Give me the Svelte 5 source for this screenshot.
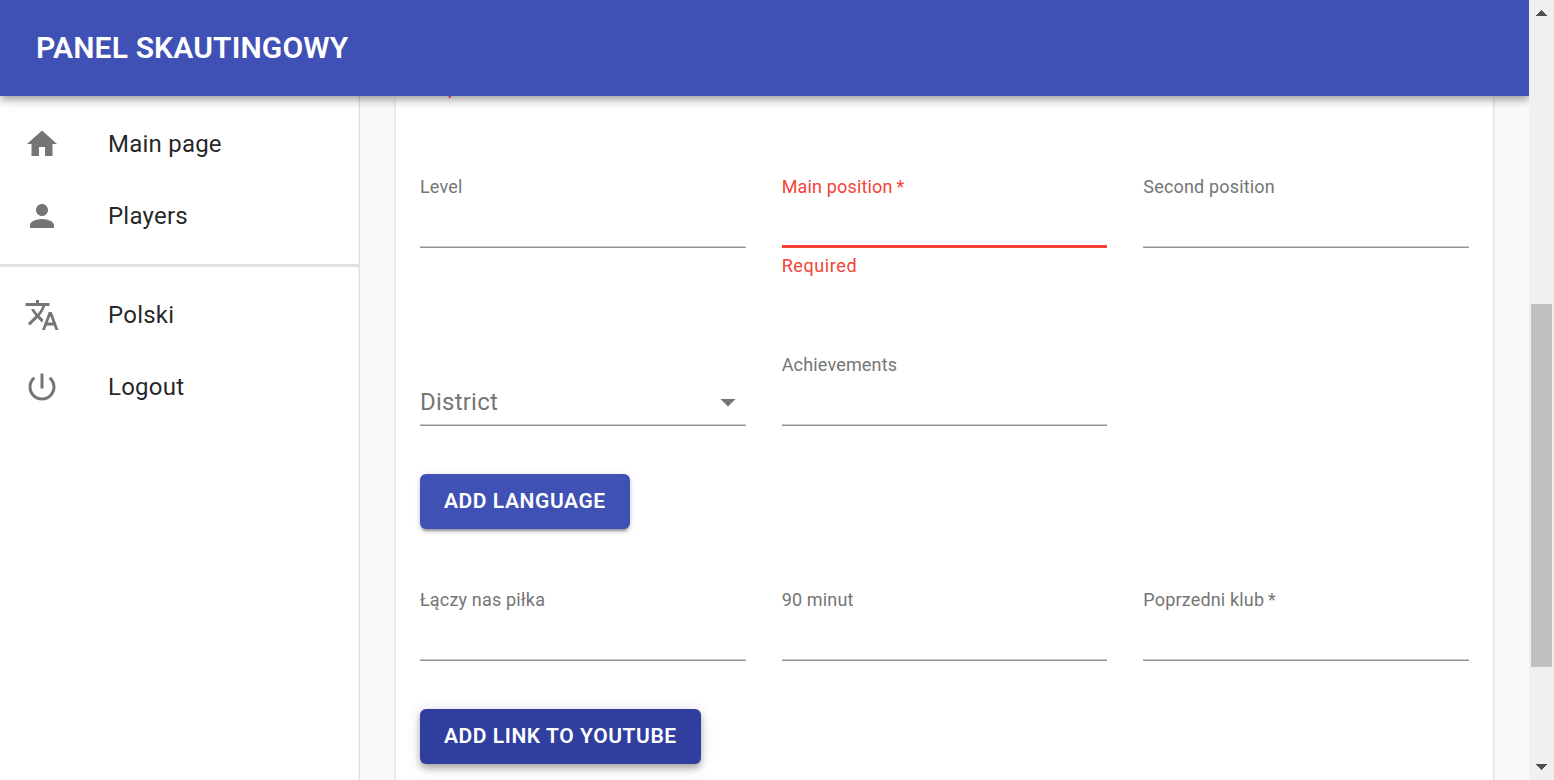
<script>
  const mainLinks = [
    { label: 'Main page', icon: 'M10 20v-6h4v6h5v-8h3L12 3 2 12h3v8z' },
    { label: 'Players', icon: 'M12 12c2.21 0 4-1.79 4-4s-1.79-4-4-4-4 1.79-4 4 1.79 4 4 4zm0 2c-2.67 0-8 1.34-8 4v2h16v-2c0-2.66-5.33-4-8-4z' }
  ];
  const userLinks = [
    { label: 'Polski', icon: 'M12.87 15.07l-2.54-2.51.03-.03c1.74-1.94 2.98-4.17 3.71-6.53H17V4h-7V2H8v2H1v1.99h11.17C11.5 7.92 10.44 9.75 9 11.35 8.07 10.32 7.3 9.19 6.69 8h-2c.73 1.63 1.73 3.17 2.98 4.56l-5.09 5.02L4 19l5-5 3.11 3.11.76-2.04zM18.5 10h-2L12 22h2l1.12-3h4.75L21 22h2l-4.5-12zm-2.62 7l1.62-4.33L19.12 17h-3.24z' },
    { label: 'Logout', icon: 'M13 3h-2v10h2V3zm4.83 2.17l-1.42 1.42C17.99 7.86 19 9.81 19 12c0 3.87-3.13 7-7 7s-7-3.13-7-7c0-2.19 1.01-4.14 2.58-5.42L6.17 5.17C4.23 6.82 3 9.26 3 12c0 4.97 4.03 9 9 9s9-4.03 9-9c0-2.74-1.23-5.18-3.17-6.83z' }
  ];
</script>

{#snippet links(items)}
  <ul>
    {#each items as item}
      <li>
        <svg viewBox="0 0 24 24"><path d={item.icon} /></svg>
        <span>{item.label}</span>
      </li>
    {/each}
  </ul>
{/snippet}

{#snippet field(label, error = '')}
  <div class="cell">
    <div class="field" class:error={error !== ''}>
      <span class="label">{label}</span>
    </div>
    {#if error}<p class="helper">{error}</p>{/if}
  </div>
{/snippet}

<div class="window">
  <div class="app">
    <header><h1>PANEL SKAUTINGOWY</h1></header>
    <div class="body">
      <nav>
        {@render links(mainLinks)}
        <hr />
        {@render links(userLinks)}
      </nav>
      <main>
        <form class="card">
          <p class="helper clipped">Required</p>
          <div class="row first">
            {@render field('Level')}
            {@render field('Main position\u2009*', 'Required')}
            {@render field('Second position')}
          </div>
          <div class="row">
            <div class="cell">
              <div class="field select">
                <span>District</span>
                <svg viewBox="0 0 24 24"><path d="M7 10l5 5 5-5z" /></svg>
              </div>
            </div>
            {@render field('Achievements')}
          </div>
          <button type="button">ADD LANGUAGE</button>
          <div class="row clubs">
            {@render field('Łączy nas piłka')}
            {@render field('90 minut')}
            {@render field('Poprzedni klub\u2009*')}
          </div>
          <button type="button" class="active">ADD LINK TO YOUTUBE</button>
        </form>
      </main>
    </div>
  </div>
  <div class="scrollbar">
    <svg class="arrow" viewBox="0 0 11 6" shape-rendering="crispEdges"><path d="M5 0h1v1h1v1h1v1h1v1h1v1h1v1H0V5h1V4h1V3h1V2h1V1h1z" /></svg>
    <div class="thumb"></div>
    <svg class="arrow" viewBox="0 0 11 6" shape-rendering="crispEdges"><path d="M0 0h11v1h-1v1H9v1H8v1H7v1H6v1H5V5H4V4H3V3H2V2H1V1H0z" /></svg>
  </div>
</div>

<style>
  :global(body) {
    overflow: hidden;
    font-family: Roboto, sans-serif;
    font-weight: 400;
    color: rgba(0, 0, 0, 0.87);
  }
  .window {
    display: flex;
    height: 780px;
    overflow: hidden;
  }
  .app {
    flex: 1;
    display: flex;
    flex-direction: column;
    overflow: hidden;
    background: #fafafa;
  }
  header {
    position: relative;
    z-index: 2;
    flex: none;
    height: 96px;
    padding: 0 36px;
    display: flex;
    align-items: center;
    background: #3f51b5;
    color: #fff;
    box-shadow: 0 3px 6px -1.5px rgba(0, 0, 0, 0.2), 0 6px 7.5px rgba(0, 0, 0, 0.14), 0 1.5px 15px rgba(0, 0, 0, 0.12);
  }
  h1 {
    margin: 0;
    font-size: 30px;
    line-height: 48px;
    font-weight: 600;
    letter-spacing: 0.15px;
  }
  .body {
    flex: 1;
    display: flex;
    min-height: 0;
  }
  nav {
    box-sizing: border-box;
    width: 360px;
    flex: none;
    background: #fff;
    border-right: 1px solid #e0e0e0;
    box-shadow: inset -1px 0 #f3f3f3;
  }
  ul {
    list-style: none;
    margin: 0;
    padding: 12px 0;
  }
  li {
    height: 72px;
    padding-left: 24px;
    display: flex;
    align-items: center;
    gap: 48px;
    font-size: 24px;
    line-height: 36px;
    letter-spacing: 0.225px;
  }
  li svg {
    width: 36px;
    height: 36px;
    fill: #757575;
  }
  hr {
    margin: 0;
    border: 0;
    height: 3px;
    background: #e0e0e0;
  }
  main {
    flex: 1;
    padding: 0 36px;
  }
  .card {
    box-sizing: border-box;
    height: 900px;
    padding: 0 24px;
    background: #fff;
    box-shadow: 0 3px 1.5px -1.5px rgba(0, 0, 0, 0.2), 0 1.5px 1.5px rgba(0, 0, 0, 0.14), 0 1.5px 4.5px rgba(0, 0, 0, 0.12);
    display: flex;
    flex-direction: column;
    align-items: flex-start;
  }
  .row {
    width: 100%;
    display: grid;
    grid-template-columns: repeat(3, 1fr);
    gap: 36px;
    height: 178px;
    flex: none;
  }
  .row:not(.first) {
    height: 120px;
  }
  .field {
    box-sizing: border-box;
    height: 72px;
    color: #757575;
    background: linear-gradient(#c9c9c9 50%, #949494 50%) bottom / 100% 2px no-repeat;
  }
  .label {
    display: block;
    font-size: 18px;
    line-height: 22px;
    letter-spacing: 0.17px;
  }
  .field.error {
    color: #f44336;
    background: linear-gradient(#f44336, #f44336) bottom / 100% 3px no-repeat;
  }
  .helper {
    margin: 3px 0 0;
    font-size: 18px;
    line-height: 30px;
    letter-spacing: 0.6px;
    color: #f44336;
  }
  .clipped {
    flex: none;
    margin: -23px 0 73px;
  }
  .select {
    display: flex;
    align-items: flex-end;
    justify-content: space-between;
    padding-bottom: 6px;
    font-size: 24px;
    line-height: 36px;
    letter-spacing: 0.225px;
  }
  .select svg {
    width: 36px;
    height: 36px;
    fill: #757575;
  }
  button {
    flex: none;
    height: 55px;
    padding: 0 24px;
    border: 0;
    border-radius: 6px;
    background: #3f51b5;
    color: #fff;
    font: 600 21px/36.75px Roboto, sans-serif;
    letter-spacing: 0.57px;
    box-shadow: 0 4.5px 1.5px -3px rgba(0, 0, 0, 0.2), 0 3px 3px rgba(0, 0, 0, 0.14), 0 1.5px 7.5px rgba(0, 0, 0, 0.12);
  }
  button.active {
    background: #303f9f;
    box-shadow: 0 3px 6px -1.5px rgba(0, 0, 0, 0.2), 0 6px 7.5px rgba(0, 0, 0, 0.14), 0 1.5px 15px rgba(0, 0, 0, 0.12);
  }
  .row.clubs {
    margin-top: 60px;
  }
  .scrollbar {
    box-sizing: border-box;
    width: 25px;
    flex: none;
    padding: 10px 0;
    background: #f0f0f0;
    display: flex;
    flex-direction: column;
    align-items: center;
  }
  .arrow {
    width: 11px;
    height: 6px;
    fill: #505050;
  }
  .thumb {
    width: 21px;
    height: 363px;
    margin: 288px 2px 97px;
    background: #c1c1c1;
  }
</style>
